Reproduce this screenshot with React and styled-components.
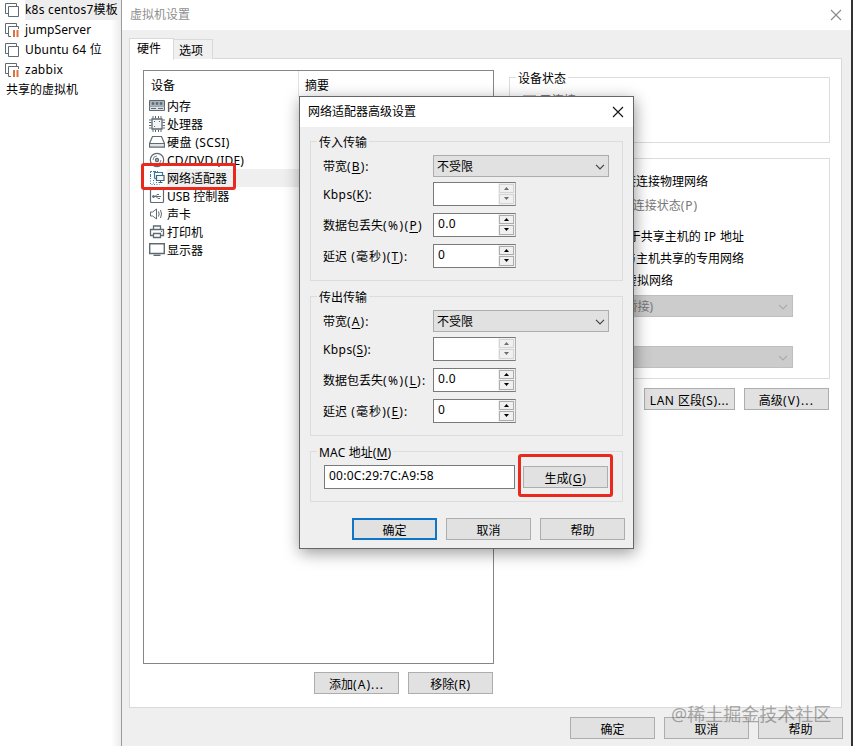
import React from "react";
import styled, { createGlobalStyle, css } from "styled-components";

const Global = createGlobalStyle`
  *, *::before, *::after { box-sizing: border-box; }
  html, body { margin: 0; padding: 0; overflow: hidden; }
  body {
    font-family: "Noto Sans", "Noto Sans CJK SC", sans-serif;
    font-size: 12px;
    line-height: 18px;
    color: #000;
    background: #fff;
  }
  u { text-underline-offset: 2px; text-decoration-thickness: 1px; }
`;

const Screen = styled.div`
  position: relative;
  width: 853px;
  height: 746px;
  display: flex;
  overflow: hidden;
  background: #fff;
`;

const Text = styled.span`
  white-space: pre;
`;
const Latin = styled.span`
  letter-spacing: ${(p) => p.$ls || 0.9}px;
`;

/* ---- library sidebar ---- */
const Sidebar = styled.aside`
  width: 121px;
  flex: none;
  background: linear-gradient(to right, #fff 111px, #ececec 121px);
`;
const VmRow = styled.div`
  height: 20px;
  display: flex;
  align-items: center;
  padding-left: 5px;
  gap: 5px;
`;
const VmName = styled.div`
  height: 20px;
  line-height: 20px;
  flex: 1;
  white-space: pre;
  letter-spacing: ${(p) => p.$ls || 0}px;
  background: ${(p) => (p.$active ? "#ededed" : "transparent")};
`;
const SharedRow = styled.div`
  height: 20px;
  line-height: 20px;
  padding-left: 6px;
`;

/* ---- settings window ---- */
const Window = styled.main`
  width: 732px;
  flex: none;
  height: 746px;
  display: flex;
  flex-direction: column;
  background: #efefef;
  border-left: 1px solid #9b9b9b;
  border-right: 2px solid #333;
`;
const TitleBar = styled.header`
  height: 30px;
  flex: none;
  display: flex;
  align-items: center;
  justify-content: space-between;
  padding: 0 9px 1px 8px;
  background: #fff;
  color: #8f8f8f;
`;
const Tabs = styled.div`
  height: 29px;
  flex: none;
  display: flex;
  align-items: flex-end;
  padding-left: 7px;
`;
const Tab = styled.div`
  width: ${(p) => p.$w}px;
  height: ${(p) => (p.$active ? 22 : 20)}px;
  margin-bottom: ${(p) => (p.$active ? -1 : 0)}px;
  padding-left: ${(p) => (p.$active ? 7 : 5)}px;
  line-height: ${(p) => (p.$active ? 20 : 21)}px;
  background: ${(p) => (p.$active ? "#fff" : "#f0f0f0")};
  border: 1px solid #d9d9d9;
  border-bottom: 0;
  ${(p) => !p.$active && css`border-left: 0;`}
  z-index: 1;
`;
const Panel = styled.section`
  width: 713px;
  height: 650px;
  flex: none;
  margin: -1px 0 0 7px;
  padding: 11px 11px 0 13px;
  display: flex;
  gap: 15px;
  border: 1px solid #d9d9d9;
  background: #fff;
`;
const DeviceColumn = styled.div`
  width: 351px;
  flex: none;
`;
const DeviceList = styled.div`
  height: 594px;
  border: 1px solid #84878a;
`;
const ListHead = styled.div`
  height: 26px;
  display: flex;
  line-height: 29px;
`;
const HeadCell = styled.div`
  width: ${(p) => p.$w}px;
  padding-left: ${(p) => p.$pad}px;
  ${(p) => p.$line && css`border-right: 1px solid #e2e2e2;`}
`;
const Device = styled.div`
  height: 18px;
  display: flex;
  align-items: center;
  padding-left: 5px;
  gap: 2px;
`;
const DeviceName = styled.span`
  flex: 1;
  height: 18px;
  line-height: 20px;
  white-space: pre;
  letter-spacing: ${(p) => p.$ls || 0}px;
  background: ${(p) => (p.$active ? "#efefef" : "transparent")};
`;
const ButtonRow = styled.div`
  display: flex;
  justify-content: flex-end;
  gap: 9px;
  padding: ${(p) => p.$pad || 0};
  margin-right: ${(p) => p.$shift || 0}px;
`;
const Button = styled.button`
  width: ${(p) => p.$w || 85}px;
  height: 22px;
  flex: none;
  padding: 3px 0 0;
  display: flex;
  align-items: center;
  justify-content: center;
  font: inherit;
  line-height: 18px;
  color: #000;
  white-space: pre;
  background: #e1e1e1;
  border: ${(p) => (p.$primary ? "2px solid #0f75c6" : "1px solid #adadad")};
`;
const SettingsColumn = styled.div`
  width: 321px;
  flex: none;
  padding-top: 7px;
`;
const Group = styled.section`
  height: ${(p) => p.$h}px;
  margin-bottom: ${(p) => p.$gap || 0}px;
  border: 1px solid #dcdcdc;
`;
const Legend = styled.div`
  width: max-content;
  height: 18px;
  line-height: 20px;
  margin: -9px 0 0 6px;
  padding: 0 2px;
  background: ${(p) => p.$bg};
  white-space: pre;
`;
const CheckRow = styled.div`
  display: flex;
  align-items: center;
  gap: 4px;
  padding: 5px 0 0 13px;
  color: #777;
`;
const CheckBox = styled.i`
  width: 13px;
  height: 13px;
  border: 1px solid #bbb;
`;
const Option = styled.div`
  height: 22px;
  line-height: 22px;
  padding-right: ${(p) => p.$right}px;
  margin-top: ${(p) => p.$top || 0}px;
  text-align: right;
  white-space: pre;
  color: ${(p) => (p.$muted ? "#777" : "#000")};
`;
const DisabledSelect = styled.div`
  width: 245px;
  height: 22px;
  margin: ${(p) => p.$top}px 0 0 38px;
  padding: 2px 4px 0 0;
  display: flex;
  align-items: center;
  justify-content: space-between;
  color: #777;
  background: #ccc;
  border: 1px solid #bfbfbf;
`;
const SelectValue = styled.span`
  width: 104px;
  text-align: right;
`;

/* ---- advanced dialog ---- */
const Dialog = styled.div`
  position: absolute;
  left: 299px;
  top: 96px;
  width: 335px;
  height: 453px;
  background: #efefef;
  border: 1px solid #666;
  box-shadow: 1px 4px 15px rgba(0, 0, 0, 0.4);
`;
const DialogTitle = styled.header`
  height: 30px;
  display: flex;
  align-items: center;
  justify-content: space-between;
  padding: 0 9px 0 8px;
  background: #fff;
`;
const DialogBody = styled.div`
  padding: 14px 10px 0;
`;
const Field = styled.div`
  height: ${(p) => p.$h}px;
  display: flex;
  align-items: center;
`;
const FieldLabel = styled.label`
  width: 110px;
  flex: none;
  padding-top: 3px;
  white-space: pre;
`;
const Fields = styled.div`
  padding-left: 12px;
`;
const Select = styled.div`
  width: 176px;
  height: 22px;
  padding: 3px 3px 0 3px;
  display: flex;
  align-items: center;
  justify-content: space-between;
  background: #e1e1e1;
  border: 1px solid #adadad;
`;
const Spin = styled.div`
  width: 83px;
  height: 24px;
  display: flex;
  background: #fff;
  border: 1px solid #7a7a7a;
  border-right-color: #b0b0b0;
`;
const SpinValue = styled.div`
  flex: 1;
  padding-left: 4px;
  line-height: 20px;
  letter-spacing: 0.3px;
`;
const Arrows = styled.div`
  width: 17px;
  display: flex;
  flex-direction: column;
  gap: 1px;
  padding: 1px;
  background: #f0f0f0;
`;
const Arrow = styled.div`
  flex: 1;
  display: flex;
  align-items: center;
  justify-content: center;
  color: ${(p) => (p.$off ? "#6d6d6d" : "#000")};
  background: #f0f0f0;
  border: 1px solid ${(p) => (p.$off ? "#d4d4d4" : "#acacac")};
`;
const MacRow = styled.div`
  display: flex;
  align-items: center;
  gap: 8px;
  padding: 4px 0 0 13px;
`;
const MacInput = styled.div`
  width: 191px;
  height: 24px;
  padding-left: 4px;
  line-height: 20px;
  letter-spacing: 0.25px;
  background: #fff;
  border: 1px solid #7a7a7a;
`;

/* ---- overlays ---- */
const Highlight = styled.div`
  position: absolute;
  left: ${(p) => p.$x}px;
  top: ${(p) => p.$y}px;
  width: ${(p) => p.$w}px;
  height: ${(p) => p.$h}px;
  border: 3px solid #e9291e;
  border-radius: 3px;
`;
const Watermark = styled.div`
  position: absolute;
  left: 671px;
  top: 702px;
  font-size: 18px;
  line-height: 24px;
  white-space: pre;
  color: rgba(100, 100, 100, 0.55);
`;

/* ---- icons ---- */
const Svg = ({ w = 16, h = 16, sw = 1, children }) => (
  <svg width={w} height={h} viewBox={`0 0 ${w} ${h}`} fill="none" stroke="#5f6b73" strokeWidth={sw}>
    {children}
  </svg>
);
const CloseIcon = ({ color }) => (
  <svg width="12" height="12" viewBox="0 0 12 12" stroke={color} strokeWidth="1.1">
    <path d="M1 1l10 10M11 1L1 11" />
  </svg>
);
const Chevron = ({ color }) => (
  <svg width="10" height="6" viewBox="0 0 10 6" fill="none" stroke={color} strokeWidth="1.2">
    <path d="M1 .8l4 4 4-4" />
  </svg>
);
const VmIcon = ({ paused }) => (
  <Svg w={15} h={16}>
    <path d="M3 11.500H.5v-10h11V4" />
    {paused ? (
      <>
        <path d="M6 14.500H3.500v-10h10V7" />
        <path d="M9 8v7M12.500 8v7" stroke="#dc7240" strokeWidth="2" />
      </>
    ) : (
      <path d="M3.500 4.500h10v10h-10z" />
    )}
  </Svg>
);
const MemoryIcon = () => (
  <Svg>
    <path d="M.5 2.500h15v6H.5z" fill="#aab3b9" />
    <path d="M3 4.500h2v2H3zM7 4.500h2v2H7zM11 4.500h2v2h-2z" fill="#5f6b73" strokeWidth=".5" />
    <path d="M.5 8.500v4h15v-4" fill="#dfe3e6" />
    <path d="M2 10.500h5M9 10.500h5" />
  </Svg>
);
const CpuIcon = () => (
  <Svg>
    <path d="M3 3h10v10H3z" fill="#f3f5f6" strokeWidth="1.300" />
    <path d="M4 0v2.500M6.500 0v2.500M9.500 0v2.500M12 0v2.500M4 13.500V16M6.500 13.500V16M9.500 13.500V16M12 13.500V16M0 4h2.500M0 6.500h2.500M0 9.500h2.500M0 12h2.500M13.500 4H16M13.500 6.500H16M13.500 9.500H16M13.500 12H16" />
    <path d="M5 5.500h1M10 5.500h1M5 10.500h1" />
  </Svg>
);
const DiskIcon = () => (
  <Svg sw={1.2}>
    <path d="M3.500 2.500h9l3 7v3.500H.5V9.500z" />
    <path d="M.5 9.500h15V13H.5z" fill="#dfe3e6" />
  </Svg>
);
const DiscIcon = () => (
  <Svg sw={1.2}>
    <circle cx="8" cy="8" r="6.700" />
    <circle cx="8" cy="8" r="1.600" fill="#aab3b9" />
    <path d="M4 8a4 4 0 0 1 4-4M12 8a4 4 0 0 1-4 4" strokeWidth=".8" />
  </Svg>
);
const NetIcon = () => (
  <Svg>
    <path d="M1.500 7V1.500H9" stroke="#397aa5" strokeDasharray="3 1" />
    <path d="M1.500 8v6.500h9M4.500 10v4M7.500 12v2" stroke="#397aa5" strokeDasharray="1 1.500" />
    <path d="M5.500 8.500V2.500h8v3" stroke="#397aa5" strokeWidth="1.200" />
    <path d="M5.500 8.500h2" stroke="#397aa5" strokeWidth="1.200" />
    <path d="M7.500 5.500h7.500v5H7.500z" stroke="#3d647e" strokeWidth="1.200" fill="#f8f8f8" />
    <path d="M11.500 11v1.500M9.500 12.500h4" stroke="#3d647e" />
  </Svg>
);
const UsbIcon = () => (
  <Svg>
    <rect x="1.500" y="1.500" width="13" height="13" rx="1" strokeWidth="1.200" />
    <path d="M4 8.500h8M6 8.500l2-2h2M7 8.500l2 2h2" />
    <circle cx="4.500" cy="8.500" r="1" fill="#5f6b73" />
  </Svg>
);
const SoundIcon = () => (
  <Svg>
    <path d="M1.500 6h2.200L7.500 3v10L3.700 10H1.500zM9.500 5.500q1.200 2.500 0 5M11.500 4q2 4 0 8" />
  </Svg>
);
const PrintIcon = () => (
  <Svg sw={1.3}>
    <path d="M4.500 5.500V2h7v3.500M4 11.500H1.500v-6h13v6H12M4.500 9.500h7v4h-7z" />
    <path d="M12 7.500h1" strokeWidth="1" />
  </Svg>
);
const DisplayIcon = () => (
  <Svg sw={1.4}>
    <path d="M.7 1.700h14.600v9.800H.7z" />
    <path d="M4.500 13.300h7" />
  </Svg>
);

const vms = [
  { name: "k8s centos7模板", ls: 0.2, active: true },
  { name: "jumpServer", ls: 0.1, paused: true },
  { name: "Ubuntu 64 位", ls: 0.2 },
  { name: "zabbix", ls: 0.25, paused: true },
];
const devices = [
  { name: "内存", Icon: MemoryIcon },
  { name: "处理器", Icon: CpuIcon },
  { name: "硬盘 (SCSI)", Icon: DiskIcon, ls: 0.4 },
  { name: "CD/DVD (IDE)", Icon: DiscIcon, ls: 0.15 },
  { name: "网络适配器", Icon: NetIcon, active: true },
  { name: "USB 控制器", Icon: UsbIcon },
  { name: "声卡", Icon: SoundIcon },
  { name: "打印机", Icon: PrintIcon },
  { name: "显示器", Icon: DisplayIcon },
];

const Spinner = ({ value, off }) => (
  <Spin>
    <SpinValue>{value}</SpinValue>
    <Arrows>
      <Arrow $off={off}>
        <svg width="5" height="3" viewBox="0 0 5 3" fill="currentColor"><path d="M0 3L2.500 0 5 3z" /></svg>
      </Arrow>
      <Arrow $off={off}>
        <svg width="5" height="3" viewBox="0 0 5 3" fill="currentColor"><path d="M0 0h5L2.500 3z" /></svg>
      </Arrow>
    </Arrows>
  </Spin>
);

const TransferGroup = ({ title, keys, tail }) => (
  <Group $h={140} $gap={15}>
    <Legend $bg="#efefef">{title}</Legend>
    <Fields>
      <Field $h={29}>
        <FieldLabel>带宽<Latin $ls={1.1}>(<u>{keys[0]}</u>):</Latin></FieldLabel>
        <Select>
          <Text>不受限</Text>
          <Chevron color="#444" />
        </Select>
      </Field>
      <Field $h={27}>
        <FieldLabel><Latin $ls={0.4}>Kbps(<u>{keys[1]}</u>):</Latin></FieldLabel>
        <Spinner off />
      </Field>
      <Field $h={35}>
        <FieldLabel>数据包丢失<Latin $ls={1.4}>(%)(<u>{keys[2]}</u>){tail}</Latin></FieldLabel>
        <Spinner value="0.0" />
      </Field>
      <Field $h={27}>
        <FieldLabel>延迟<Latin $ls={1.1}> (毫秒)(<u>{keys[3]}</u>):</Latin></FieldLabel>
        <Spinner value="0" />
      </Field>
    </Fields>
  </Group>
);

export default function App() {
  return (
    <Screen>
      <Global />
      <Sidebar>
        {vms.map((vm) => (
          <VmRow key={vm.name}>
            <VmIcon paused={vm.paused} />
            <VmName $ls={vm.ls} $active={vm.active}>{vm.name}</VmName>
          </VmRow>
        ))}
        <SharedRow>共享的虚拟机</SharedRow>
      </Sidebar>

      <Window>
        <TitleBar>
          <Text>虚拟机设置</Text>
          <CloseIcon color="#888" />
        </TitleBar>
        <Tabs>
          <Tab $w={45} $active>硬件</Tab>
          <Tab $w={39}>选项</Tab>
        </Tabs>
        <Panel>
          <DeviceColumn>
            <DeviceList>
              <ListHead>
                <HeadCell $w={155} $pad={7} $line>设备</HeadCell>
                <HeadCell $w={190} $pad={6}>摘要</HeadCell>
              </ListHead>
              {devices.map(({ name, Icon, active, ls }) => (
                <Device key={name}>
                  <Icon />
                  <DeviceName $ls={ls} $active={active}>{name}</DeviceName>
                </Device>
              ))}
            </DeviceList>
            <ButtonRow $pad="8px 1px 0 0">
              <Button>添加<Latin $ls={1.1}>(A)...</Latin></Button>
              <Button>移除<Latin $ls={0.6}>(R)</Latin></Button>
            </ButtonRow>
          </DeviceColumn>
          <SettingsColumn>
            <Group $h={66} $gap={15}>
              <Legend $bg="#fff">设备状态</Legend>
              <CheckRow><CheckBox /><Text>已连接<Latin>(C)</Latin></Text></CheckRow>
            </Group>
            <Group $h={221} $gap={9}>
              <Option $top={12} $right={121}>直接连接物理网络</Option>
              <Option $top={2} $right={131} $muted>网络连接状态<Latin $ls={0.9}>(P)</Latin></Option>
              <Option $top={9} $right={85}>用于共享主机的<Latin $ls={0.4}> IP </Latin>地址</Option>
              <Option $right={85}>与主机共享的专用网络</Option>
              <Option $right={156}>特定虚拟网络</Option>
              <DisabledSelect $top={3}>
                <SelectValue>(自动桥接)</SelectValue>
                <Chevron color="#aaa" />
              </DisabledSelect>
              <DisabledSelect $top={29}>
                <SelectValue />
                <Chevron color="#aaa" />
              </DisabledSelect>
            </Group>
            <ButtonRow $pad="0 1px 0 0">
              <Button $w={91}><Latin $ls={0.5}>LAN </Latin>区段<Latin $ls={0.6}>(S)...</Latin></Button>
              <Button>高级<Latin $ls={1.2}>(V)...</Latin></Button>
            </ButtonRow>
          </SettingsColumn>
        </Panel>
        <ButtonRow $pad="9px 8px 0 0">
          <Button>确定</Button>
          <Button>取消</Button>
          <Button>帮助</Button>
        </ButtonRow>
      </Window>

      <Highlight $x={141} $y={163} $w={95} $h={27} />

      <Dialog>
        <DialogTitle>
          <Text>网络适配器高级设置</Text>
          <CloseIcon color="#111" />
        </DialogTitle>
        <DialogBody>
          <TransferGroup title="传入传输" keys={["B", "K", "P", "T"]} tail="" />
          <TransferGroup title="传出传输" keys={["A", "S", "L", "E"]} tail=":" />
          <Group $h={51} $gap={16}>
            <Legend $bg="#efefef"><Latin $ls={0.2}>MAC </Latin>地址<Latin $ls={0.1}>(<u>M</u>)</Latin></Legend>
            <MacRow>
              <MacInput>00:0C:29:7C:A9:58</MacInput>
              <Button>生成<Latin $ls={0.7}>(<u>G</u>)</Latin></Button>
            </MacRow>
          </Group>
          <ButtonRow $shift={-2}>
            <Button $primary>确定</Button>
            <Button>取消</Button>
            <Button>帮助</Button>
          </ButtonRow>
        </DialogBody>
      </Dialog>

      <Highlight $x={518} $y={454} $w={95} $h={43} />
      <Watermark>@稀土掘金技术社区</Watermark>
    </Screen>
  );
}
